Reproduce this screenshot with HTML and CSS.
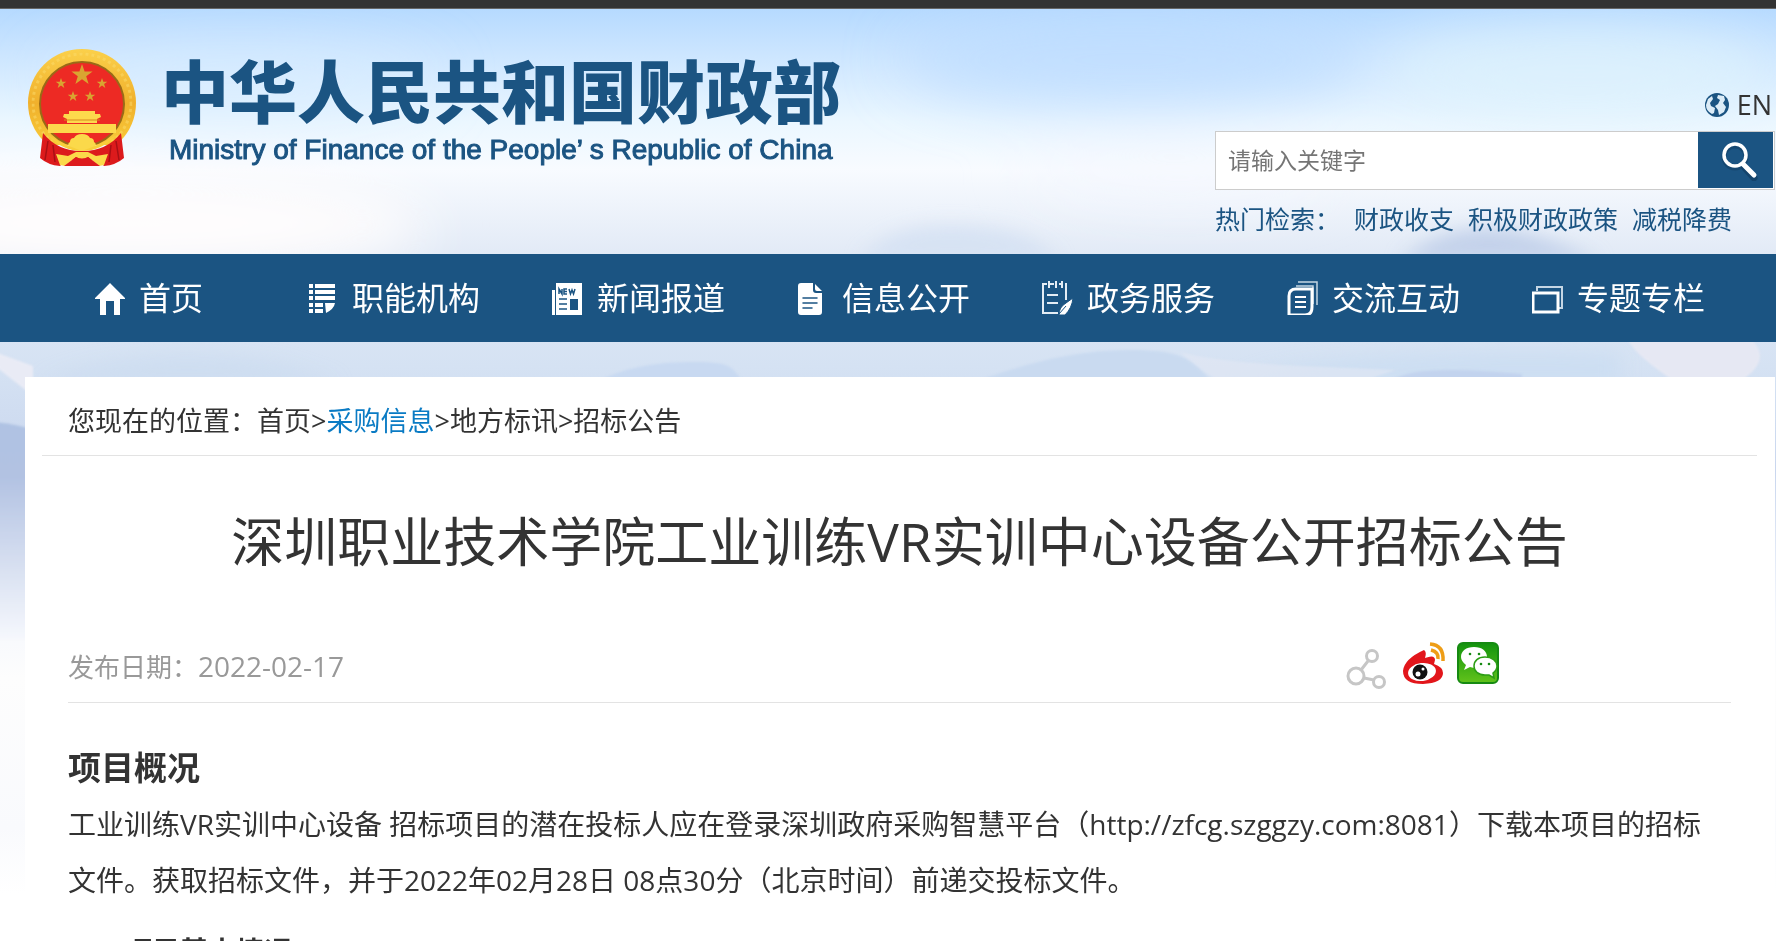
FILE: index.html
```html
<!DOCTYPE html>
<html lang="zh-CN">
<head>
    <meta charset="UTF-8">
    <title>深圳职业技术学院工业训练VR实训中心设备公开招标公告</title>
    <link rel="stylesheet" href="styles.css">
</head>
<body>

<!-- 背景山水 -->
<svg class="page-bg" viewBox="0 0 1776 941" preserveAspectRatio="none" aria-hidden="true">
    <defs>
        <linearGradient id="sky" x1="0" y1="0" x2="0" y2="1">
            <stop offset="0.01" stop-color="#b6daff"/>
            <stop offset="0.06" stop-color="#cde6ff"/>
            <stop offset="0.13" stop-color="#ebf7ff"/>
            <stop offset="0.18" stop-color="#f8fbff"/>
            <stop offset="0.27" stop-color="#e2eaf6"/>
            <stop offset="0.39" stop-color="#d5e2f3"/>
            <stop offset="0.5" stop-color="#c9d6ee"/>
            <stop offset="0.66" stop-color="#f6f8fd"/>
            <stop offset="0.72" stop-color="#fdfdfd"/>
            <stop offset="0.88" stop-color="#f9fafd"/>
            <stop offset="0.95" stop-color="#fff"/>
        </linearGradient>
        <linearGradient id="hill" x1="0" y1="0" x2="0" y2="1">
            <stop offset="0" stop-color="#afc2e3"/>
            <stop offset=".25" stop-color="#b2c2e2"/>
            <stop offset="1" stop-color="#f6f8fd"/>
        </linearGradient>
        <filter id="soft" x="-50%" y="-50%" width="200%" height="200%"><feGaussianBlur stdDeviation="28"/></filter>
        <filter id="mist" x="-20%" y="-50%" width="140%" height="200%"><feGaussianBlur stdDeviation="9"/></filter>
        <filter id="edge" x="-5%" y="-5%" width="110%" height="110%"><feGaussianBlur stdDeviation="1"/></filter>
    </defs>
    <rect width="1776" height="941" fill="url(#sky)"/>
    <g filter="url(#soft)">
        <ellipse cx="130" cy="225" rx="300" ry="50" fill="#fffdfd"/>
        <ellipse cx="1130" cy="60" rx="230" ry="50" fill="#bcdcff" opacity=".7"/>
        <ellipse cx="1580" cy="70" rx="200" ry="44" fill="#def2fd" opacity=".8"/>
        <ellipse cx="1180" cy="170" rx="160" ry="30" fill="#f5f7fe" opacity=".8"/>
        <ellipse cx="240" cy="80" rx="200" ry="40" fill="#d9edff" opacity=".6"/>
    </g>
    <g filter="url(#mist)">
        <path d="M860 262c20-30 60-40 110-36s70 14 90 36z" fill="#d3e0f2" opacity=".8"/>
        <path d="M1400 262c30-30 80-40 120-30s60 20 80 30z" fill="#c3d1ea"/>
        <path d="M40 384c60-30 160-34 240-20l60 20z" fill="#cbdcf0" opacity=".7"/>
        <path d="M1240 384c40-26 180-34 380-30v30z" fill="#ccdef2"/>
    </g>
    <g filter="url(#edge)">
        <path d="M-5 352l38 14v30L-5 366z" fill="#e9ebf5"/>
        <path d="M-5 422q20 2 40 8v210H-5z" fill="url(#hill)"/>
        <path d="M600 380c30-14 60-18 96-18s36 6 46 18z" fill="#c8d9f1"/>
        <path d="M980 380c40-14 90-30 150-30 50 0 60 8 80 30z" fill="#c9daf0"/>
        <path d="M1180 352c12 10 22 18 36 28h150l30-10c-80-4-160-4-216-18z" fill="#e3e8f4" opacity=".6"/>
        <path d="M1392 380c20-12 60-12 130-6v6z" fill="#c2d3ee"/>
        <path d="M1628 340c8 14 22 24 44 40h70q30-20 10-40z" fill="#e6e8f3"/>
    </g>
</svg>

<div class="top-line"></div>

<div class="header">
    <a class="logo">
        <svg class="emblem" viewBox="0 0 110 118" aria-hidden="true">
            <defs>
                <linearGradient id="gold" x1="0" y1="0" x2="0" y2="1">
                    <stop offset="0" stop-color="#fbd04a"/>
                    <stop offset=".5" stop-color="#f0b02c"/>
                    <stop offset="1" stop-color="#fbd23c"/>
                </linearGradient>
            </defs>
            <circle cx="55" cy="54" r="54" fill="url(#gold)" clip-path="inset(0 0 12px 0)"/>
            <circle cx="55" cy="54" r="49" fill="none" stroke="#fbdc6c" stroke-width="3" stroke-dasharray="3 3" opacity=".5" clip-path="inset(0 0 12px 0)"/>
            <circle cx="55" cy="55" r="42" fill="#ed2a24" stroke="#9a6a17" stroke-width="2"/>
            <path d="M55 15l2.600 7.500h8l-6.400 4.800 2.400 7.700-6.600-4.700-6.600 4.700 2.400-7.700-6.400-4.800h8z" fill="#d9a431"/>
            <g fill="#d9a431">
                <path id="star" d="M34 29l1.300 3.700h4l-3.200 2.400 1.200 3.900-3.300-2.400-3.300 2.400 1.200-3.900-3.200-2.400h4z"/>
                <use href="#star" x="41"/>
                <use href="#star" x="12" y="13"/>
                <use href="#star" x="29" y="13"/>
            </g>
            <path d="M42 62h26v3h5l1 3-4 2v4H40v-4l-4-2 1-3h5zM21 75h68v9H21z" fill="#fdd94c"/>
            <path d="M37 71h36" stroke="#d9881f" stroke-width="1"/>
            <!-- 绶带 -->
            <path d="M16 84q14 18 39 18t39-18l3 25q-8 7-20 8l-6-6H39l-6 6q-12-1-20-8z" fill="#dc1a1c"/>
            <path d="M21 86q14 16 34 16t34-16l-5 3q-12 9-29 9t-29-9z" fill="#f8cf3b"/>
            <path d="M21 92l-3 19M26 96l2 17M89 92l3 19M84 96l-2 17" stroke="#a80f14" stroke-width="1.500"/>
            <path d="M42 97q-2-2 1-4 0-4 4-4 2-4 8-4t8 4q4 0 4 4 3 2 1 4l-13 5z" fill="#fbd94a"/>
            <path d="M29 105l12 2 8-4h12l8 4 12-2-4 11-5 1-11-9q-6 4-12 0l-11 9-5-1z" fill="#fbd94a"/>
            <path d="M37 117l12-9q6 3 12 0l12 9z" fill="#dd1b1d"/>
        </svg>
        <span class="logo-text">
            <strong>中华人民共和国财政部</strong>
            <span>Ministry of Finance of the People’ s Republic of China</span>
        </span>
    </a>

    <div class="header-right">
        <a class="lang">
            <svg viewBox="0 0 24 24" aria-hidden="true">
                <circle cx="12" cy="12" r="12" fill="#1b5482"/>
                <path d="M3 6l4-3 1 3-3 4 1 3 4 2-1 5-2 1Q1 18 1 12z" fill="#dcecf7"/>
                <path d="M13 2l6 1 1 4-2 3 3 4-2 5-5 3-1-5-3-4 3-2 2-4-3-2z" fill="#dcecf7"/>
            </svg>
            EN
        </a>
        <form class="search">
            <input type="text" placeholder="请输入关键字" aria-label="请输入关键字">
            <button type="button" aria-label="搜索">
                <svg viewBox="0 0 42 42" aria-hidden="true">
                    <path d="M27 29l9 10" stroke="#0e3657" stroke-width="7" stroke-linecap="round" opacity=".5"/>
                    <circle cx="17" cy="18" r="11" fill="none" stroke="#0e3657" stroke-width="5" opacity=".4"/>
                    <circle cx="17" cy="16" r="11" fill="none" stroke="#fff" stroke-width="3.500"/>
                    <path d="M25 25l11 11" stroke="#fff" stroke-width="5" stroke-linecap="round"/>
                </svg>
            </button>
        </form>
        <div class="hot">
            <span>热门检索：</span>
            <a>财政收支</a>
            <a>积极财政政策</a>
            <a>减税降费</a>
        </div>
    </div>
</div>

<div class="nav">
    <ul>
        <li><a>
            <svg viewBox="0 0 32 34" aria-hidden="true"><path d="M16 2L1 17v1h5v16h6V20h8v14h6V18h5v-1z" fill="#fff"/></svg>首页
        </a></li>
        <li><a>
            <svg viewBox="0 0 32 34" aria-hidden="true"><path d="M2 3h4v4H2zm6 0h20v4H8zM2 9h4v4H2zm6 0h20v4H8zM2 15h4v4H2zm6 0h20v4H8zM2 22h4v4H2zm6 0h8v4H8zM2 28h4v4H2zm6 0h8v4H8zm10-6h10q-1 6-9 10z" fill="#fff"/></svg>职能机构
        </a></li>
        <li><a>
            <svg viewBox="0 0 32 34" aria-hidden="true">
                <path d="M4 2h26v32H4zM0 9h3v25H0z" fill="#fff"/>
                <path d="M7 13V8l3 5V8m5 0h-3v5h3m-3-2.500h3M17 8l1.500 5L20 9l1.500 4L23 8M7 18h8M7 23h8M7 28h8" fill="none" stroke="#1b5482" stroke-width="1.500"/>
                <path d="M18 18h8v11h-8z" fill="#1b5482"/>
            </svg>新闻报道
        </a></li>
        <li><a>
            <svg viewBox="0 0 32 34" aria-hidden="true">
                <path d="M4 2h12v7q0 3 3 3h6v19q0 3-3 3H4q-3 0-3-3V5q0-3 3-3zM18 3l7 7h-5q-2 0-2-2z" fill="#fff"/>
                <path d="M6 17h14M6 22h14M6 27h9" stroke="#1b5482" stroke-width="1.500" stroke-linecap="round"/>
            </svg>信息公开
        </a></li>
        <li><a>
            <svg viewBox="0 0 32 34" aria-hidden="true">
                <path d="M5 3H1v29h15M8 3h4m5 0h3m3 0h1v16M7 0v7m7-7v7m6-7v7M5 14h11M5 22h11" fill="none" stroke="#e4edf5" stroke-width="2"/>
                <path d="M31 17q-1 10-8 17h-6q0-8 7-12zM17 33l7-8" fill="#fff" stroke="#1b5482"/>
            </svg>政务服务
        </a></li>
        <li><a>
            <svg viewBox="0 0 32 34" aria-hidden="true">
                <path d="M11 1h19v23M9 5h17v18" fill="none" stroke="#c5d6e4" stroke-width="1.500"/>
                <path d="M2 34V15q0-7 7-7h16v18q0 8-7 8z" fill="none" stroke="#fff" stroke-width="3"/>
                <path d="M8 16h11M8 21h11M8 26h11" stroke="#fff" stroke-width="2"/>
            </svg>交流互动
        </a></li>
        <li><a>
            <svg viewBox="0 0 32 34" aria-hidden="true">
                <path d="M5 10V6h25v21h-4" fill="none" stroke="#c5d6e4" stroke-width="2"/>
                <path d="M1 12h25v19H1z" fill="none" stroke="#fff" stroke-width="3"/>
            </svg>专题专栏
        </a></li>
    </ul>
</div>

<div class="main">
    <div class="crumb">您现在的位置：<a>首页</a>&gt;<a class="cur">采购信息</a>&gt;<a>地方标讯</a>&gt;<a>招标公告</a></div>
    <div class="article">
        <h1>深圳职业技术学院工业训练VR实训中心设备公开招标公告</h1>
        <div class="info">
            <span>发布日期：<span class="date">2022-02-17</span></span>
            <div class="share">
                <a aria-label="分享">
                    <svg viewBox="0 0 42 42" aria-hidden="true">
                        <g fill="none" stroke="#c6c6c6" stroke-width="3">
                            <circle cx="7" cy="34" r="8"/><circle cx="23" cy="14" r="5.500"/><circle cx="30" cy="40" r="5.500"/>
                            <path d="M12 28l7-9M15 36l10 2"/>
                        </g>
                    </svg>
                </a>
                <a aria-label="微博">
                    <svg viewBox="0 0 42 42" aria-hidden="true">
                        <path d="M21 8q3 2 1 8 10-4 10 2l-1 4q9 3 9 9 0 10-20 11Q0 42 0 29 1 17 21 8z" fill="#e2161b"/>
                        <ellipse cx="19" cy="30" rx="14" ry="9" fill="#fff" transform="rotate(-7 19 30)"/>
                        <circle cx="17" cy="30" r="7.500" fill="#111"/>
                        <circle cx="15" cy="32" r="2.500" fill="#fff"/><circle cx="20" cy="27" r="1.500" fill="#fff"/>
                        <path d="M27 2q14 1 13 17M28 8q8 2 7 9" fill="none" stroke="#ee9d16" stroke-width="3.500"/>
                    </svg>
                </a>
                <a aria-label="微信">
                    <svg viewBox="0 0 42 42" aria-hidden="true">
                        <defs><linearGradient id="wx" x1="0" y1="0" x2="0" y2="1"><stop offset="0" stop-color="#12930d"/><stop offset="1" stop-color="#62c31b"/></linearGradient></defs>
                        <rect x="1" y="1" width="40" height="40" rx="5" fill="url(#wx)" stroke="#168a12" stroke-width="2"/>
                        <path d="M17 5c8 0 13 4 13 10s-5 11-13 11l-4-1-6 3 2-5q-5-4-5-8C4 9 9 5 17 5z" fill="#fff"/>
                        <path d="M28 15c7 0 12 4 12 9q0 4-4 7l1 5-5-3h-4c-7 0-11-4-11-9s4-9 11-9z" fill="#fff" stroke="#2c9d15" stroke-width="1.500"/>
                        <g fill="#168a12"><circle cx="13" cy="12" r="1.300"/><circle cx="22" cy="12" r="1.300"/><circle cx="24" cy="22" r="1.300"/><circle cx="32" cy="22" r="1.300"/></g>
                    </svg>
                </a>
            </div>
        </div>
        <div class="content">
            <h2>项目概况</h2>
            <p>工业训练VR实训中心设备 招标项目的潜在投标人应在登录深圳政府采购智慧平台（http://zfcg.szggzy.com:8081）下载本项目的招标文件。获取招标文件，并于2022年02月28日 08点30分（北京时间）前递交投标文件。</p>
            <h3>一、项目基本情况</h3>
        </div>
    </div>
</div>

</body>
</html>
```

FILE: styles.css
```css
*{ margin:0; padding:0; box-sizing:border-box;}
html{scrollbar-width:none;}
body{position:relative; font:26px/1.5 "Open Sans","Noto Sans CJK SC",sans-serif; color:#333; background:#fff;}
li{list-style:none;}
a{color:inherit; text-decoration:none; cursor:pointer;}
svg{display:block; flex:none;}
/* 背景 */
.page-bg{position:absolute; top:0; left:0; width:100%; height:100vh; z-index:-1;}
.top-line{height:9px; background:#333; border-bottom:1px solid #666;}
/* header */
.header{display:flex; justify-content:space-between; height:245px;}
.logo{display:flex; align-items:flex-start; padding:40px 0 0 27px; color:#1b5482;}
.emblem{width:110px; height:118px;}
.logo-text{display:block; margin-left:24px;}
.logo-text strong{display:block; font-size:68px; line-height:86px; font-weight:900; white-space:nowrap;}
.logo-text span{display:block; padding-left:8px; font:28px/30px "Liberation Sans",Arial,sans-serif; -webkit-text-stroke:1px #1b5482; white-space:nowrap;}
.header-right{width:561px; padding-top:78px;}
.lang{display:flex; align-items:center; justify-content:flex-end; gap:8px; padding-right:4px; font-size:27px; line-height:36px;}
.lang svg{width:24px; height:24px;}
.search{display:flex; height:59px; margin:8px 1px 0 0; padding-right:1px; background:#fff; border:1px solid #ccc;}
.search input{flex:1; min-width:0; padding:0 12px; border:0; outline:none; font:inherit; font-size:23px; background:none;}
.search input::placeholder{color:#757575;}
.search button{display:flex; align-items:center; justify-content:center; width:75px; height:56px; padding-left:6px; border:0; background:#1b5482; cursor:pointer;}
.search button svg{width:42px; height:42px;}
.hot{display:flex; gap:14px; margin-top:10px; font-size:25px; line-height:38px; color:#1b5482; white-space:nowrap;}
/* nav */
.nav{height:88px; padding:0 35px 0 26px; background:#1b5482;}
.nav ul{display:flex;}
.nav li{flex:1;}
.nav a{display:flex; align-items:center; justify-content:center; gap:13px; height:88px; font-size:32px; line-height:86px; color:#fff; white-space:nowrap;}
.nav svg{width:32px; height:34px;}
/* main */
.main{min-height:600px; margin:35px 1px 0 25px; padding:0 18px 0 17px; background:#fff;}
.crumb{height:79px; padding:0 26px; border-bottom:1px solid #e3e3e3; font-size:27px; line-height:88px;}
.crumb .cur{color:#0a7bc4;}
.article{padding:0 26px;}
.article h1{padding-top:46px; font-size:53px; line-height:80px; font-weight:normal; text-align:center; white-space:nowrap;}
.info{display:flex; align-items:center; justify-content:space-between; height:121px; padding-top:48px; border-bottom:1px solid #e3e3e3; color:#999;}
.info .date{font-size:28px;}
.share{display:flex; gap:12px; padding:0 232px 6px 0;}
.share svg{width:42px; height:42px; overflow:visible;}
.content{padding:37px 8px 0 0; font-size:28px; line-height:56px;}
.content h2{font-size:33px; line-height:56px;}
.content h3{padding-top:15px; font-size:28px; line-height:56px;}
```
